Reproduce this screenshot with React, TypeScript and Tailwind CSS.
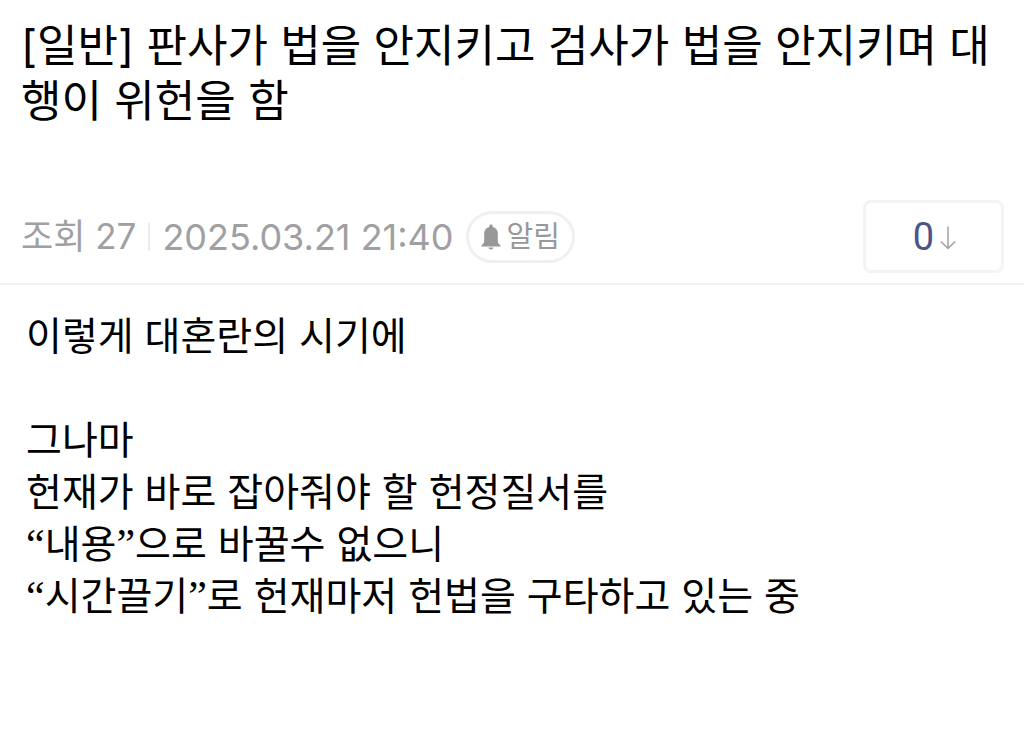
import React from 'react';

const bodyLines = [
  '이렇게 대혼란의 시기에',
  '',
  '그나마',
  '헌재가 바로 잡아줘야 할 헌정질서를',
  '“내용”으로 바꿀수 없으니',
  '“시간끌기”로 헌재마저 헌법을 구타하고 있는 중',
];

function BellIcon() {
  return (
    <svg viewBox="0 0 20 26" className="h-[26px] w-5 fill-[#98989a]" aria-hidden="true">
      <path d="M10 .6c-1 0-1.700.7-1.700 1.600v.7C5.200 3.500 3.200 6 3.200 9.200v7.300c0 2.200-.7 3.300-2.200 4.400-.5.400-.7.700-.7 1 0 .4.3.6.8.6h17.800c.5 0 .8-.2.8-.6 0-.3-.2-.6-.7-1-1.500-1.100-2.200-2.200-2.200-4.400V9.200c0-3.200-2-5.700-5.100-6.300v-.7C11.700 1.300 11 .6 10 .6z" />
      <path d="M7.500 23.500h5c-.3 1.200-1.200 1.900-2.500 1.900s-2.200-.7-2.500-1.900z" />
    </svg>
  );
}

function ArrowDownIcon() {
  return (
    <svg viewBox="0 0 16 24" className="h-6 w-4 fill-none stroke-[#a2a2a4]" strokeWidth="1.5" aria-hidden="true">
      <path d="M8 .5v22M.8 15.500L8 22.500l7.200-7" />
    </svg>
  );
}

// curly quotes are set in the serif face, the rest in sans
function BodyLine({ text }: { text: string }) {
  return (
    <p className="min-h-[52px]">
      {text.split(/([“”])/).map((part, i) =>
        part === '“' || part === '”' ? (
          <span key={i} className="font-['Liberation_Serif',serif] text-[42px] leading-none">{part}</span>
        ) : (
          part
        )
      )}
    </p>
  );
}

export default function App() {
  return (
    <main className="min-h-screen bg-white font-['Inter','Noto_Sans_CJK_KR',sans-serif] text-black">
      <header className="border-b-2 border-[#f2f2f3] pr-5 pl-[21px] pt-[19px] pb-[10px]">
        <h1 className="break-all text-[44px] leading-[55px]">
          [일반] 판사가 법을 안지키고 검사가 법을 안지키며 대행이 위헌을 함
        </h1>
        <div className="mt-[71px] flex items-center justify-between">
          <div className="flex items-center text-[#a0a0a2]">
            <span className="text-[35px]">조회 27</span>
            <span className="mx-3 h-7 w-[2px] bg-[#ececed]" />
            <time dateTime="2025-03-21T21:40" className="text-[36px]">2025.03.21 21:40</time>
            <button className="ml-3 flex h-[52px] items-center gap-[6px] rounded-full border-[3px] border-[#f0f0f1] px-3 text-[29px] text-[#98989a]">
              <BellIcon />
              알림
            </button>
          </div>
          <button className="flex h-[73px] w-[141px] items-center justify-center gap-[6px] rounded-lg border-[3px] border-[#f4f4f5] pt-[2px] pl-[2px] font-[Roboto,sans-serif] text-[38px] text-[#4c5488]">
            0
            <ArrowDownIcon />
          </button>
        </div>
      </header>
      <article className="px-[26px] pt-[25px] text-[39px] leading-[52px]">
        {bodyLines.map((line, i) => (
          <BodyLine key={i} text={line} />
        ))}
      </article>
    </main>
  );
}
